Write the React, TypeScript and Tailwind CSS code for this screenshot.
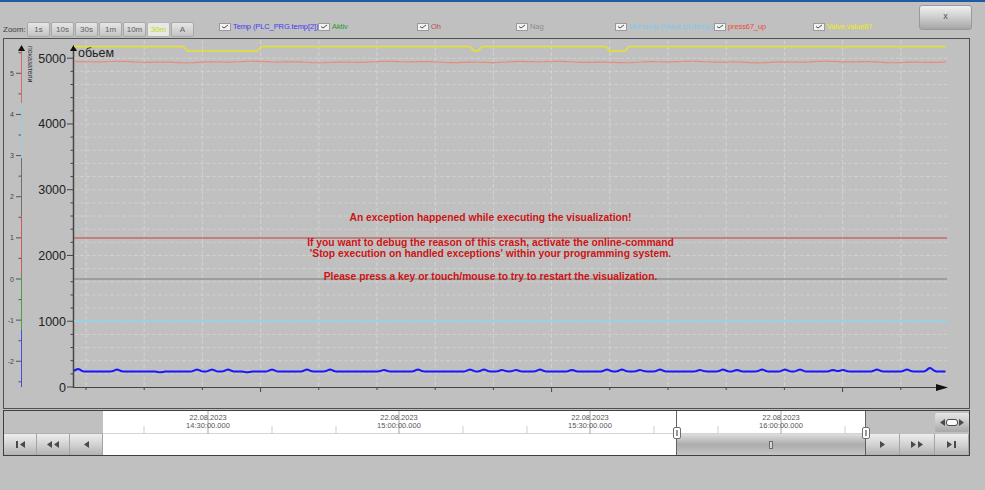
import React from "react";

const zooms = ["1s", "10s", "30s", "1m", "10m", "30m", "A"];

const legend = [
  { label: "Temp (PLC_PRG.temp[2])", color: "text-[#3c3cf0]" },
  { label: "Aktiv", color: "text-[#2a9a2a]" },
  { label: "Oh", color: "text-[#c04a4a]" },
  { label: "Nag", color: "text-[#8c8c8c]" },
  { label: "Unt temp (Value.UnTemp)", color: "text-[#7cc8ec]" },
  { label: "press67_up", color: "text-[#f04a3a]" },
  { label: "Valve.value67", color: "text-[#f0f000]" },
];

// bumps on the blue trend line: [x, height]
const bumps: [number, number][] = [
  [78, 2.5], [117, 2], [160, -0.7], [197, 2], [212, 2], [228, 2], [247, -0.7],
  [272, 2], [307, 2], [330, 2], [384, 1.5], [418, 2], [470, 2], [484, 2],
  [502, 1.5], [516, 1.5], [540, 2], [572, 1.5], [607, 2], [622, 2], [640, 1.5],
  [660, 2], [700, 1.5], [723, 2], [737, 1.5], [762, 2], [785, 2], [800, 2],
  [833, 1.5], [843, 1.5], [877, 2], [907, 2], [930, 3.5],
];

function bluePath() {
  let d = "";
  for (let x = 74; x <= 946; x += 1.5) {
    let y = 371.5;
    for (const [bx, h] of bumps) {
      const dx = (x - bx) / 3.5;
      y -= h * Math.exp(-dx * dx);
    }
    d += (x === 74 ? "M" : "L") + x.toFixed(1) + " " + y.toFixed(2);
  }
  return d;
}

function salmonPath() {
  let d = "";
  for (let x = 74; x <= 946; x += 4) {
    const y = 62 + 0.5 * Math.sin(x / 23) + 0.3 * Math.sin(x / 7);
    d += (x === 74 ? "M" : "L") + x + " " + y.toFixed(2);
  }
  return d;
}

const leftY = (v: number) => 279 - 41.14 * v;
const rightY = (v: number) => 387 - v * 0.06576;
const gridX = Array.from({ length: 15 }, (_, k) => 86 + 58.2 * k);

const leftTicks: number[] = [];
for (let v = -2.5; v <= 5.5; v += 0.5) leftTicks.push(v);
const rightTicks: number[] = [];
for (let v = 0; v <= 5000; v += 200) rightTicks.push(v);

const leftSegments = [
  { y1: 50, y2: 103, c: "#d86a6a" },
  { y1: 103, y2: 158, c: "#96cce2" },
  { y1: 158, y2: 215, c: "#707070" },
  { y1: 215, y2: 275, c: "#cc5a5a" },
  { y1: 275, y2: 330, c: "#4aa04a" },
  { y1: 330, y2: 387, c: "#4a4ae6" },
];

const dates = [
  { x: 208, t: "14:30:00.000" },
  { x: 399, t: "15:00:00.000" },
  { x: 590, t: "15:30:00.000" },
  { x: 781, t: "16:00:00.000" },
];
const minorX = [144, 272, 336, 463, 527, 654, 718, 845];

const Check = () => (
  <div className="w-[12px] h-[8px] border border-[#9a9a9a] bg-[#f2f2f2] flex items-center justify-center shrink-0">
    <svg width="8" height="5" viewBox="0 0 8 5">
      <polyline points="1,2.5 3,4 7,1" fill="none" stroke="#505050" strokeWidth="1" />
    </svg>
  </div>
);

const Tri = ({ dir }: { dir: "l" | "r" }) => (
  <svg width="5" height="7" viewBox="0 0 5 7">
    <polygon points={dir === "l" ? "5,0 0,3.5 5,7" : "0,0 5,3.5 0,7"} fill="#4a4a4a" />
  </svg>
);

const Bar = () => <div className="w-[2px] h-[7px] bg-[#4a4a4a]" />;

const NavButton = ({ children, w }: { children: React.ReactNode; w: string }) => (
  <div className={`${w} h-full flex items-center justify-center gap-[2px] border-r border-[#a4a4a4] bg-linear-to-b from-[#ededed] via-[#d2d2d2] to-[#b2b2b2]`}>
    {children}
  </div>
);

export default function App() {
  return (
    <div className="w-[985px] h-[490px] bg-[#c0c0c0] overflow-hidden font-['Liberation_Sans',Arial,sans-serif]">
      <div className="h-[2px] bg-[#2059a6]" />

      {/* header: zoom buttons, legend, close */}
      <div className="flex h-[36px]">
        <div className="flex items-start pt-[20px] pl-[3px]">
          <span className="w-[24px] h-[15px] flex items-center text-[8px] text-[#404040]">Zoom:</span>
          <div className="flex gap-[1px]">
            {zooms.map((z) => (
              <div
                key={z}
                className={
                  z === "30m"
                    ? "w-[23px] h-[15px] flex items-center justify-center text-[8px] rounded-[2px] border border-[#b4b4b4] bg-[#e8e8e8] text-[#c4dc00]"
                    : "w-[23px] h-[15px] flex items-center justify-center text-[8px] rounded-[2px] border border-[#a8a8a8] bg-linear-to-b from-[#e6e6e6] to-[#c4c4c4] text-[#606060]"
                }
              >
                {z}
              </div>
            ))}
          </div>
        </div>

        <div className="flex ml-[25px] pt-[20px]">
          {legend.map((l) => (
            <div key={l.label} className="w-[99px] h-[9px] flex items-center gap-[2px] overflow-hidden whitespace-nowrap">
              <Check />
              <span className={`text-[7.5px] leading-[9px] tracking-[-0.1px] ${l.color}`}>{l.label}</span>
            </div>
          ))}
        </div>

        <div className="ml-[7px] mt-[3px] w-[53px] h-[25px] rounded-[3px] border border-[#9a9a9a] bg-linear-to-b from-[#f0f0f0] via-[#cdcdcd] to-[#a6a6a6] flex justify-center pt-[6px] text-[9px] leading-[9px] text-[#505050]">
          x
        </div>
      </div>

      {/* trend chart */}
      <div className="relative ml-[3px] w-[967px] h-[371px] border border-[#505050]">
        <svg width={965} height={369} viewBox="4 39 965 369" className="block">
          {rightTicks.slice(1).map((v) => (
            <line key={v} x1={74} x2={947} y1={rightY(v)} y2={rightY(v)} stroke="#cfcfcf" strokeDasharray="4 2" />
          ))}
          {gridX.map((x) => (
            <line key={x} x1={x} x2={x} y1={40} y2={387} stroke="#d2d2d2" strokeDasharray="4 2" />
          ))}

          {/* left value axis */}
          {leftSegments.map((s) => (
            <line key={s.y1} x1={21.5} x2={21.5} y1={s.y1} y2={s.y2} stroke={s.c} strokeWidth={1} />
          ))}
          <polygon points="21.5,45 18,51 25,51" fill="#111" />
          {leftTicks.map((v) => {
            const major = Number.isInteger(v);
            return (
              <g key={v}>
                <line x1={major ? 16 : 18.5} x2={21} y1={leftY(v)} y2={leftY(v)} stroke="#555" />
                {major && (
                  <text x={14} y={leftY(v) + 2.5} fontSize={7} textAnchor="end" fill="#444">
                    {v}
                  </text>
                )}
              </g>
            );
          })}
          <text x={28} y={46} fontSize={7} fill="#333" transform="rotate(90 28 46)">
            показатели
          </text>

          {/* right value axis */}
          <line x1={73.5} x2={73.5} y1={50} y2={388} stroke="#454545" strokeWidth={1.5} />
          <polygon points="73.5,45 70,51 77,51" fill="#111" />
          {rightTicks.map((v) => {
            const major = v % 1000 === 0;
            return (
              <g key={v}>
                <line x1={major ? 67 : 70.5} x2={73} y1={rightY(v)} y2={rightY(v)} stroke="#454545" />
                {major && (
                  <text x={66} y={rightY(v) + 4.5} fontSize={12.5} textAnchor="end" fill="#222">
                    {v}
                  </text>
                )}
              </g>
            );
          })}
          <text x={78} y={56.5} fontSize={12.5} fill="#222">
            обьем
          </text>

          {/* time axis */}
          <line x1={73} x2={940} y1={387.5} y2={387.5} stroke="#454545" strokeWidth={1.2} />
          <polygon points="936,384 936,391 948,387.5" fill="#111" />
          {gridX.map((x, k) => (
            <line key={k} x1={x} x2={x} y1={388} y2={k % 5 === 3 ? 392 : 390} stroke="#454545" />
          ))}

          {/* trends */}
          <path
            d="M74 46.5H183L188 51H257L262 46.5H470L474 51H478L482 46.5H606L610 51H625L629 46.5H946"
            fill="none"
            stroke="#e4e42c"
            strokeWidth={1.5}
          />
          <path d={salmonPath()} fill="none" stroke="#e88a7c" strokeWidth={1.2} />
          <line x1={74} x2={947} y1={238} y2={238} stroke="#c04040" strokeWidth={1} />
          <line x1={74} x2={947} y1={279} y2={279} stroke="#7a7a7a" strokeWidth={1} />
          <line x1={74} x2={947} y1={321} y2={321} stroke="#8ad6ef" strokeWidth={1.5} />
          <path d={bluePath()} fill="none" stroke="#1616ff" strokeWidth={2} />
        </svg>

        <div className="absolute left-0 right-0 top-[173px] pl-[8px] text-center text-[10.3px] leading-[11px] font-bold text-[#cc1414]">
          <div>An exception happened while executing the visualization!</div>
          <div className="mt-[14px]">If you want to debug the reason of this crash, activate the online-command</div>
          <div>'Stop execution on handled exceptions' within your programming system.</div>
          <div className="mt-[12px]">Please press a key or touch/mouse to try to restart the visualization.</div>
        </div>
      </div>

      {/* time range navigator */}
      <div className="ml-[3px] mt-[1px] w-[967px] h-[46px] border border-[#404040] flex">
        <div className="w-[99px] flex flex-col">
          <div className="h-[23px] border-b border-[#b0b0b0]" />
          <div className="h-[21px] flex">
            <NavButton w="w-[33px]">
              <Bar />
              <Tri dir="l" />
            </NavButton>
            <NavButton w="w-[33px]">
              <Tri dir="l" />
              <Tri dir="l" />
            </NavButton>
            <NavButton w="w-[33px]">
              <Tri dir="l" />
            </NavButton>
          </div>
        </div>

        <div className="relative w-[763px] flex flex-col bg-white">
          <svg width={763} height={23} viewBox="103 411 763 23" className="block">
            <line x1={103} x2={866} y1={433.5} y2={433.5} stroke="#d4d4d4" />
            {minorX.map((x) => (
              <line key={x} x1={x} x2={x} y1={426} y2={434} stroke="#cfcfcf" />
            ))}
            {dates.map((d) => (
              <g key={d.x}>
                <line x1={d.x} x2={d.x} y1={411} y2={434} stroke="#a8a8a8" />
                <text x={d.x} y={420} fontSize={7.5} textAnchor="middle" fill="#555">
                  22.08.2023
                </text>
                <text x={d.x} y={428} fontSize={7.5} textAnchor="middle" fill="#555">
                  {d.t}
                </text>
              </g>
            ))}
            <line x1={676.5} x2={676.5} y1={411} y2={434} stroke="#606060" />
            <line x1={865.5} x2={865.5} y1={411} y2={434} stroke="#606060" />
          </svg>
          <div className="h-[21px] flex">
            <div className="w-[573px] bg-white" />
            <div className="w-[190px] border-x border-[#606060] bg-linear-to-b from-[#dedede] via-[#acacac] to-[#c6c6c6] flex items-center justify-center">
              <div className="w-[4px] h-[8px] border border-[#6a6a6a] bg-[#d8d8d8]" />
            </div>
          </div>
          <div className="absolute left-[570px] top-[16px] w-[8px] h-[12px] rounded-[2px] border border-[#707070] bg-white flex justify-center">
            <div className="w-[2px] h-[6px] mt-[2px] border-x border-[#999]" />
          </div>
          <div className="absolute left-[759px] top-[16px] w-[8px] h-[12px] rounded-[2px] border border-[#707070] bg-white flex justify-center">
            <div className="w-[2px] h-[6px] mt-[2px] border-x border-[#999]" />
          </div>
        </div>

        <div className="w-[103px] flex flex-col">
          <div className="h-[23px] flex justify-end items-start pt-[2px]">
            <div className="w-[34px] h-[19px] rounded-[2px] bg-linear-to-b from-[#e6e6e6] via-[#c8c8c8] to-[#a8a8a8] flex items-center justify-center gap-[1px]">
              <Tri dir="l" />
              <div className="w-[12px] h-[7px] rounded-[3px] border border-[#4a4a4a] bg-white" />
              <Tri dir="r" />
            </div>
          </div>
          <div className="h-[21px] flex">
            <NavButton w="w-[34px]">
              <Tri dir="r" />
            </NavButton>
            <NavButton w="w-[35px]">
              <Tri dir="r" />
              <Tri dir="r" />
            </NavButton>
            <NavButton w="w-[34px]">
              <Tri dir="r" />
              <Bar />
            </NavButton>
          </div>
        </div>
      </div>
    </div>
  );
}
